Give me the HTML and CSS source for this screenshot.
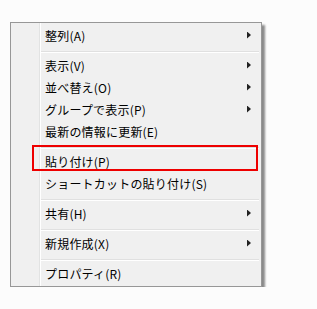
FILE: index.html
```html
<!DOCTYPE html>
<html lang="ja">
<head>
    <meta charset="UTF-8">
    <title>コンテキストメニュー</title>
    <link rel="stylesheet" href="styles.css">
</head>
<body>
    <div class="menu">
        <div class="item">整列(A)<span class="arrow"></span></div>
        <div class="sep"></div>
        <div class="item">表示(V)<span class="arrow"></span></div>
        <div class="item">並べ替え(O)<span class="arrow"></span></div>
        <div class="item">グループで表示(P)<span class="arrow"></span></div>
        <div class="item">最新の情報に更新(E)</div>
        <div class="sep"></div>
        <div class="item marked">貼り付け(P)</div>
        <div class="item">ショートカットの貼り付け(S)</div>
        <div class="sep"></div>
        <div class="item">共有(H)<span class="arrow"></span></div>
        <div class="sep"></div>
        <div class="item">新規作成(X)<span class="arrow"></span></div>
        <div class="sep"></div>
        <div class="item">プロパティ(R)</div>
    </div>
</body>
</html>
```

FILE: styles.css
```css
body {
    margin: 0;
    background-color: #fcfcfc;
    font-family: "Noto Sans CJK JP", "Noto Sans", sans-serif;
    font-size: 12px;
    color: #000;
}

.menu {
    width: 250px;
    margin: 22px 0 0 10px;
    padding: 2px 0 1px 0;
    border: 1px solid #979797;
    background: linear-gradient(to right, #f0f0f0 28px, #e2e3e3 28px 29px, #fff 29px 30px, #f0f0f0 30px);
    box-shadow: 3px 3px 2px rgba(0, 0, 0, 0.45);
}

.item {
    display: flex;
    justify-content: space-between;
    align-items: center;
    height: 22px;
    box-sizing: border-box;
    padding: 0 10px 2px 34px;
    position: relative;
    letter-spacing: 0.2px;
}

.arrow {
    width: 4px;
    height: 7px;
    background-color: #222;
    clip-path: polygon(0 0, 100% 50%, 0 100%);
}

.sep {
    margin: 4px 2px 2px 30px;
    border-top: 1px solid #e0e0e0;
    border-bottom: 1px solid #fff;
}

.marked::after {
    content: "";
    position: absolute;
    top: -6px;
    left: 21px;
    width: 226px;
    height: 26px;
    box-sizing: border-box;
    border: 2px solid #ee0000;
}
```
